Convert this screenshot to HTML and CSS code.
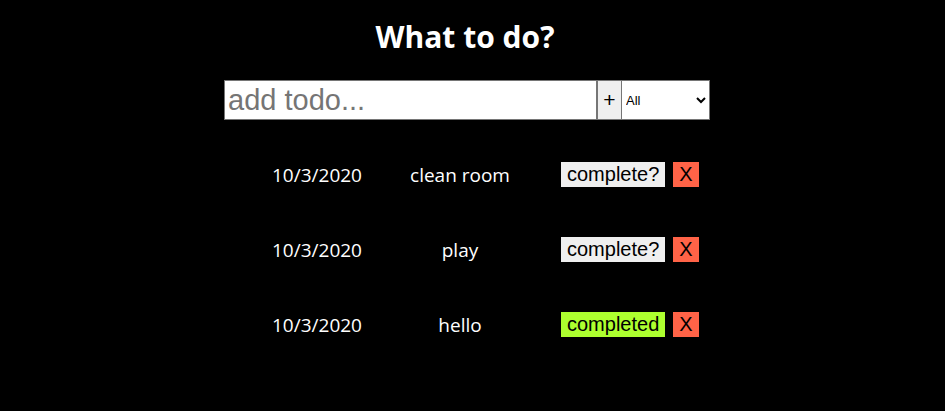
FILE: index.html
```html
<!DOCTYPE html>
<html>
<head>
<meta charset="utf-8">
<link rel="stylesheet" href="styles.css">
</head>
<body>
  <h1 class="title">What to do?</h1>
  <form class="todo-form">
    <input class="todo-input" type="text" placeholder="add todo...">
    <button class="add-btn" type="button">+</button>
    <select class="filter">
      <option>All</option>
      <option>Completed</option>
      <option>Uncompleted</option>
    </select>
  </form>
  <ul class="todo-list">
    <li class="todo">
      <span class="todo-date">10/3/2020</span>
      <span class="todo-text">clean room</span>
      <div class="todo-actions">
        <button class="complete-btn" type="button">complete?</button>
        <button class="delete-btn" type="button">X</button>
      </div>
    </li>
    <li class="todo">
      <span class="todo-date">10/3/2020</span>
      <span class="todo-text">play</span>
      <div class="todo-actions">
        <button class="complete-btn" type="button">complete?</button>
        <button class="delete-btn" type="button">X</button>
      </div>
    </li>
    <li class="todo">
      <span class="todo-date">10/3/2020</span>
      <span class="todo-text">hello</span>
      <div class="todo-actions">
        <button class="complete-btn done" type="button">completed</button>
        <button class="delete-btn" type="button">X</button>
      </div>
    </li>
  </ul>
</body>
</html>
```

FILE: styles.css
```css
html, body {
  margin: 0;
  padding: 0;
  background: #000;
}

body {
  font-family: "Open Sans", "Noto Sans", sans-serif;
  color: #fff;
}

.title {
  margin: 0;
  padding: 17px 15px 0 0;
  height: 80px;
  box-sizing: border-box;
  text-align: center;
  font-size: 30px;
  font-weight: 700;
  line-height: 40px;
}

.todo-form {
  display: flex;
  width: 486px;
  margin: 0 0 0 224px;
  height: 40px;
}

.todo-input {
  width: 373px;
  height: 40px;
  box-sizing: border-box;
  border: 1px solid #767676;
  padding: 1px 3px;
  font-family: "Liberation Sans", Arial, sans-serif;
  font-size: 29px;
  color: #000;
  background: #fff;
  outline: none;
}

.todo-input::placeholder {
  color: #757575;
}

.add-btn {
  width: 25px;
  height: 40px;
  box-sizing: border-box;
  border: 1px solid #767676;
  background: #efefef;
  padding: 0;
  font-family: "Liberation Sans", Arial, sans-serif;
  font-size: 21px;
  color: #000;
}

.filter {
  width: 88px;
  height: 40px;
  box-sizing: border-box;
  border: 1px solid #767676;
  border-left: none;
  background: #fff;
  border-radius: 0;
  font-family: "Liberation Sans", Arial, sans-serif;
  font-size: 13px;
  color: #000;
}

.todo-list {
  list-style: none;
  margin: 17px 0 0 224px;
  padding: 0;
  width: 486px;
}

.todo {
  display: flex;
  align-items: center;
  height: 75px;
}

.todo-date {
  width: 186px;
  text-align: center;
  font-size: 19px;
}

.todo-text {
  width: 100px;
  text-align: center;
  font-size: 19px;
}

.todo-actions {
  display: flex;
  gap: 8px;
  margin-left: 51px;
}

.complete-btn,
.delete-btn {
  border: none;
  border-radius: 0;
  padding: 1px 6px;
  height: 25px;
  font-family: "Liberation Sans", Arial, sans-serif;
  font-size: 20px;
  line-height: 23px;
  color: #000;
}

.complete-btn {
  background: #efefef;
  width: 104px;
}

.complete-btn.done {
  background: #adff2f;
}

.delete-btn {
  background: #ff6347;
  width: 26px;
  padding: 1px 0;
}
```
